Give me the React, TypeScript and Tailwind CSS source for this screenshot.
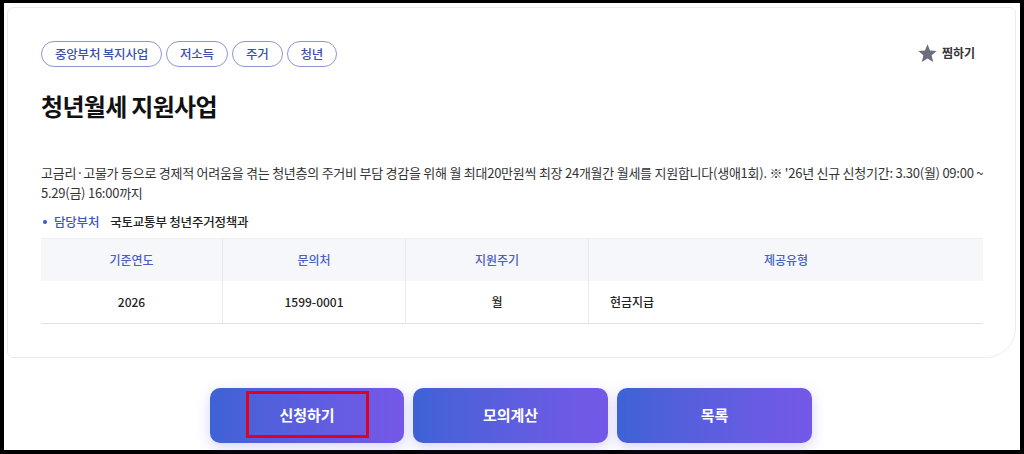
import React from "react";

const font = { fontFamily: '"Noto Sans CJK KR", "Noto Sans", sans-serif' };

function Tag({ children }: { children: React.ReactNode }) {
  return (
    <span className="h-[26px] px-[13px] flex items-center rounded-full border border-[#8c96d6] text-[12.5px] font-medium text-[#3a4fae] tracking-[-0.2px]">
      {children}
    </span>
  );
}

export default function App() {
  return (
    <div style={font} className="w-[1024px] h-[454px] bg-black pt-[3px] pl-[4px] pr-[4px] pb-[4px]">
      <div className="w-full h-full bg-white pt-[4px] pl-[3px] pr-[4px] flex flex-col">
        <div className="w-[1009px] h-[351px] border border-[#ececec] rounded-tl-[6px] rounded-tr-[6px] rounded-bl-[6px] rounded-br-[30px] pl-[33px] pr-[32px] pt-[33px] flex flex-col">
          <div className="flex items-center justify-between">
            <div className="flex gap-[4px]">
              <Tag>중앙부처 복지사업</Tag>
              <Tag>저소득</Tag>
              <Tag>주거</Tag>
              <Tag>청년</Tag>
            </div>
            <div className="flex items-center gap-[4px] mr-[8px] -mt-[2px]">
              <svg width="21" height="21" viewBox="0 0 24 24">
                <polygon
                  points="12,1.5 14.9,8.6 22.5,9.2 16.7,14.1 18.5,21.6 12,17.6 5.5,21.6 7.3,14.1 1.5,9.2 9.1,8.6"
                  fill="#6c6e7e"
                />
              </svg>
              <span className="text-[12px] font-bold text-[#333]">찜하기</span>
            </div>
          </div>
          <h1 className="mt-[24px] text-[24px] leading-[30px] font-bold text-[#111] tracking-[-0.7px]">
            청년월세 지원사업
          </h1>
          <p className="mt-[42px] text-[13px] leading-[20px] text-[#333] tracking-[-0.25px]">
            <span className="whitespace-nowrap">
              고금리·고물가 등으로 경제적 어려움을 겪는 청년층의 주거비 부담 경감을 위해 월 최대20만원씩 최장 24개월간 월세를 지원합니다(생애1회). ※ '26년 신규 신청기간: 3.30(월) 09:00 ~
            </span>
            <br />
            <span className="whitespace-nowrap">5.29(금) 16:00까지</span>
          </p>
          <div className="mt-[9px] flex items-center text-[12.5px] leading-[20px] tracking-[-0.2px]">
            <span className="w-[4px] h-[4px] rounded-full bg-[#3a55c8] ml-[2px] mr-[7px]" />
            <span className="text-[#3a55c8] font-medium">담당부처</span>
            <span className="ml-[11px] text-[#222] font-medium">국토교통부 청년주거정책과</span>
          </div>
          <div className="mt-[6px] w-[942px] border-t border-[#eeeeee]">
            <div className="grid grid-cols-[182px_183px_183px_1fr] h-[42px] bg-[#f5f7fb] text-[12px] font-medium text-[#4a5fc6]">
              <div className="flex items-center justify-center border-r border-[#e8e8ec]">기준연도</div>
              <div className="flex items-center justify-center border-r border-[#e8e8ec]">문의처</div>
              <div className="flex items-center justify-center border-r border-[#e8e8ec]">지원주기</div>
              <div className="flex items-center justify-center">제공유형</div>
            </div>
            <div className="grid grid-cols-[182px_183px_183px_1fr] h-[43px] border-b border-[#e3e3e3] text-[12px] font-medium text-[#222]">
              <div className="flex items-center justify-center border-r border-[#ececec]">2026</div>
              <div className="flex items-center justify-center border-r border-[#ececec]">1599-0001</div>
              <div className="flex items-center justify-center border-r border-[#ececec]">월</div>
              <div className="flex items-center pl-[21px]">현금지급</div>
            </div>
          </div>
        </div>
        <div className="mt-[30px] flex justify-center gap-[9px] pr-[1px]">
          <button className="relative w-[194px] h-[55px] rounded-[10px] bg-gradient-to-r from-[#3e62d6] to-[#7558e8] text-white text-[15px] font-bold shadow-[0_4px_14px_rgba(110,100,230,0.28)]">
            신청하기
            <span className="absolute left-[36px] top-[3px] w-[123px] h-[47px] border-[3px] border-[#e3001b]" />
          </button>
          <button className="w-[195px] h-[55px] rounded-[10px] bg-gradient-to-r from-[#3e62d6] to-[#7558e8] text-white text-[15px] font-bold shadow-[0_4px_14px_rgba(110,100,230,0.28)]">
            모의계산
          </button>
          <button className="w-[195px] h-[55px] rounded-[10px] bg-gradient-to-r from-[#3e62d6] to-[#7558e8] text-white text-[15px] font-bold shadow-[0_4px_14px_rgba(110,100,230,0.28)]">
            목록
          </button>
        </div>
      </div>
    </div>
  );
}
